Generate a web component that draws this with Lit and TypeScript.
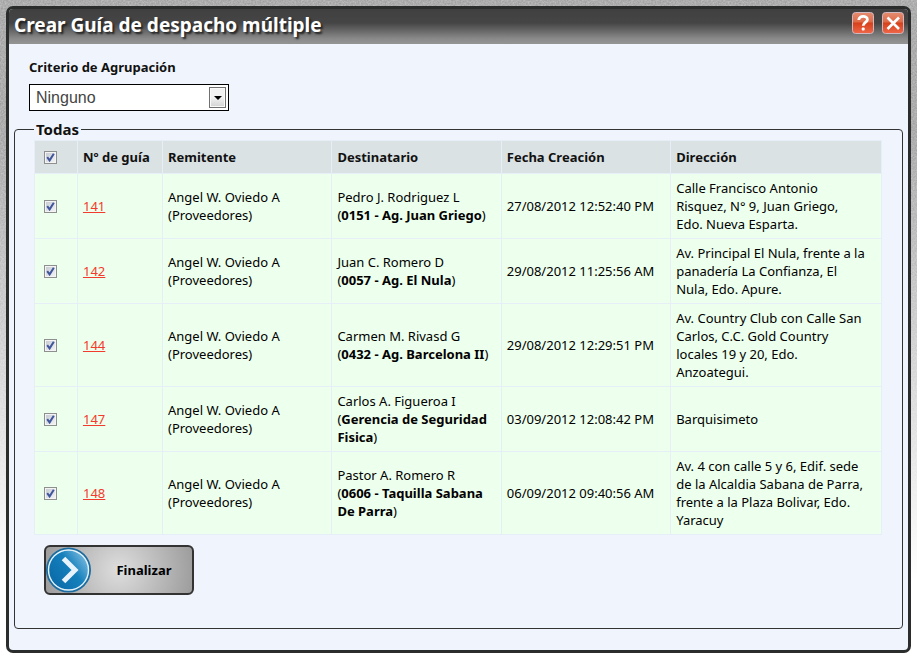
import { LitElement, html, css } from "lit";
import { customElement, property } from "lit/decorators.js";

interface Guide {
  id: number;
  recipient: string;
  agency: string;
  created: string;
  address: string;
}

const GUIDES: Guide[] = [
  { id: 141, recipient: "Pedro J. Rodriguez L", agency: "0151 - Ag. Juan Griego", created: "27/08/2012 12:52:40 PM", address: "Calle Francisco Antonio Risquez, N° 9, Juan Griego, Edo. Nueva Esparta." },
  { id: 142, recipient: "Juan C. Romero D", agency: "0057 - Ag. El Nula", created: "29/08/2012 11:25:56 AM", address: "Av. Principal El Nula, frente a la panadería La Confianza, El Nula, Edo. Apure." },
  { id: 144, recipient: "Carmen M. Rivasd G", agency: "0432 - Ag. Barcelona II", created: "29/08/2012 12:29:51 PM", address: "Av. Country Club con Calle San Carlos, C.C. Gold Country locales 19 y 20, Edo. Anzoategui." },
  { id: 147, recipient: "Carlos A. Figueroa I", agency: "Gerencia de Seguridad Fisica", created: "03/09/2012 12:08:42 PM", address: "Barquisimeto" },
  { id: 148, recipient: "Pastor A. Romero R", agency: "0606 - Taquilla Sabana De Parra", created: "06/09/2012 09:40:56 AM", address: "Av. 4 con calle 5 y 6, Edif. sede de la Alcaldia Sabana de Parra, frente a la Plaza Bolivar, Edo. Yaracuy" },
];

@customElement("guide-table")
export class GuideTable extends LitElement {
  @property({ attribute: false }) guides: Guide[] = [];

  static styles = css`
    :host { display: block; }
    table {
      width: 100%;
      table-layout: fixed;
      border-collapse: collapse;
      font-size: 13px;
      line-height: 18px;
    }
    .c-check { width: 43px; }
    .c-id { width: 85px; }
    .c-fifth { width: 20%; }
    th, td {
      border: 1px solid #e6eef8;
      padding: 5px;
      text-align: left;
      vertical-align: middle;
    }
    th { background: #dae2e4; color: #111; padding: 7px 5px; font-weight: 700; }
    td { background: #edffed; color: #000; }
    .pick { padding-left: 9px; }
    b { font-weight: 700; }
    .nowrap { white-space: nowrap; }
    .address { padding-right: 15px; }
    a { color: #f33a2c; }
    input {
      appearance: none;
      display: block;
      box-sizing: border-box;
      width: 13px;
      height: 13px;
      margin: 0;
      border: 1px solid #8e8f8f;
      box-shadow: inset 0 0 0 1px #f4f4f4;
      background: linear-gradient(135deg, #c3c8d0, #f6f6f6);
    }
    input:checked {
      background:
        url('data:image/svg+xml,<svg xmlns="http://www.w3.org/2000/svg" viewBox="0 0 11 11"><path d="M2.2 5.2 4.6 8.4 8.8 1.8" fill="none" stroke="%233f559c" stroke-width="2"/></svg>') center / 11px no-repeat,
        linear-gradient(135deg, #c3c8d0, #f6f6f6);
    }
  `;

  render() {
    return html`
      <table>
        <colgroup>
          <col class="c-check" /><col class="c-id" />
          <col class="c-fifth" /><col class="c-fifth" /><col class="c-fifth" /><col />
        </colgroup>
        <thead>
          <tr>
            <th class="pick"><input type="checkbox" checked aria-label="Seleccionar todas" /></th>
            <th>Nº de guía</th>
            <th>Remitente</th>
            <th>Destinatario</th>
            <th>Fecha Creación</th>
            <th>Dirección</th>
          </tr>
        </thead>
        <tbody>
          ${this.guides.map((g) => html`
            <tr>
              <td class="pick"><input type="checkbox" checked aria-label="Seleccionar guía ${g.id}" /></td>
              <td><a href="#${g.id}">${g.id}</a></td>
              <td>Angel W. Oviedo A<br />(Proveedores)</td>
              <td>${g.recipient}<br />(<b>${g.agency}</b>)</td>
              <td class="nowrap">${g.created}</td>
              <td class="address">${g.address}</td>
            </tr>`)}
        </tbody>
      </table>`;
  }
}

@customElement("app-root")
export class AppRoot extends LitElement {
  static styles = css`
    :host {
      display: block;
      box-sizing: border-box;
      min-height: 100vh;
      padding: 6px;
      font-family: "Noto Sans", "Open Sans", sans-serif;
      font-size: 13px;
      line-height: 18px;
      color: #111;
      background:
        linear-gradient(transparent 20%, #fff 88%),
        url('data:image/svg+xml,<svg xmlns="http://www.w3.org/2000/svg" width="200" height="200"><filter id="n" color-interpolation-filters="sRGB"><feTurbulence type="fractalNoise" baseFrequency=".6" numOctaves="2" stitchTiles="stitch"/><feColorMatrix values=".2 0 0 0 .58 .2 0 0 0 .58 .2 0 0 0 .58 0 0 0 0 1"/></filter><rect width="200" height="200" filter="url(%23n)"/></svg>'),
        #adadad;
    }
    .dialog {
      box-sizing: border-box;
      min-height: calc(100vh - 12px);
      border: 3px solid #2b2d2d;
      border-radius: 7px;
      background: #f0f5fd;
      overflow: hidden;
    }
    header {
      display: flex;
      align-items: flex-start;
      gap: 8px;
      box-sizing: border-box;
      height: 35px;
      padding: 3px 4px 0 5px;
      background: linear-gradient(#404040 0%, #454545 40%, #8a8a8a 85%, #949494 100%);
    }
    h1 {
      flex: 1;
      margin: 0;
      font-size: 19px;
      line-height: 26px;
      font-weight: 700;
      color: #fff;
      text-shadow: 2px 2px 2px #222;
    }
    .tool { display: block; width: 22px; height: 22px; padding: 0; border: 0; background: none; }
    .tool svg { display: block; }
    .criteria {
      display: flex;
      flex-direction: column;
      align-items: flex-start;
      gap: 8px;
      padding: 14px 20px 8px;
    }
    label { font-weight: 700; }
    .select { display: grid; width: 200px; }
    select, .arrow { grid-area: 1 / 1; }
    select {
      appearance: none;
      height: 27px;
      padding: 0 6px;
      border: 1px solid #000;
      border-radius: 0;
      background: #fff;
      color: #444;
      font: 16px "Liberation Sans", Arial, sans-serif;
    }
    .arrow {
      display: grid;
      place-items: center;
      place-self: center end;
      box-sizing: border-box;
      width: 17px;
      height: 21px;
      margin-right: 3px;
      border: 1px solid #707070;
      box-shadow: inset 0 0 0 1px #fafafa;
      background: linear-gradient(#f2f2f2 50%, #d2d2d2);
      pointer-events: none;
    }
    fieldset {
      min-width: 0;
      margin: 0 5px 20px;
      padding: 1px 20px 33px 19px;
      border: 1px solid #333;
      border-radius: 4px;
    }
    legend { padding: 0 2px; font-size: 15px; line-height: 20px; font-weight: 700; }
    .finish {
      display: flex;
      align-items: center;
      box-sizing: border-box;
      width: 150px;
      height: 50px;
      margin: 10px 0 0 10px;
      padding: 0;
      border: 2px solid #333;
      border-radius: 6px;
      background: radial-gradient(circle at center, #dedede, #9c9c9c);
      color: #000;
      font: 700 13px "Noto Sans", "Open Sans", sans-serif;
    }
    .finish span { flex: 1; padding-left: 4px; }
  `;

  private tool(label: string, glyph: unknown) {
    return html`
      <button class="tool" aria-label=${label}>
        <svg width="22" height="22" viewBox="0 0 22 22">
          <defs>
            <linearGradient id="red" x2="0" y2="1">
              <stop offset="0" stop-color="#e58c70" /><stop offset=".45" stop-color="#de6a48" />
              <stop offset=".5" stop-color="#d5401a" /><stop offset="1" stop-color="#f0684a" />
            </linearGradient>
          </defs>
          <rect x=".5" y=".5" width="21" height="21" rx="3" fill="url(#red)" stroke="#d0b8c0" />
          ${glyph}
        </svg>
      </button>`;
  }

  render() {
    return html`
      <main class="dialog">
        <header>
          <h1>Crear Guía de despacho múltiple</h1>
          ${this.tool("Ayuda", html`<svg width="22" height="22"><path d="M6.8 8C6.6 3.4 15.6 3.2 15.4 7.6c-.2 2.8-4.2 2.8-4.2 6.2" fill="none" stroke="#fff" stroke-width="2.8" /><rect x="9.7" y="15.6" width="3" height="3" rx="1" fill="#fff" /></svg>`)}
          ${this.tool("Cerrar", html`<svg width="22" height="22"><path d="M5.5 5.5 17 17M17 5.5 5.5 17" stroke="#fff" stroke-width="2.6" /></svg>`)}
        </header>
        <section class="criteria">
          <label for="group">Criterio de Agrupación</label>
          <div class="select">
            <select id="group"><option>Ninguno</option></select>
            <span class="arrow"><svg width="8" height="4" viewBox="0 0 8 4"><path d="M0 0h8L4 4z" /></svg></span>
          </div>
        </section>
        <fieldset>
          <legend>Todas</legend>
          <guide-table .guides=${GUIDES}></guide-table>
          <button class="finish">
            <svg width="46" height="46" viewBox="0 0 46 46">
              <defs>
                <linearGradient id="blue" x1="0" y1=".7" x2="1" y2="0">
                  <stop offset="0" stop-color="#0a6aa8" /><stop offset=".5" stop-color="#1580bc" /><stop offset="1" stop-color="#a4d2ee" />
                </linearGradient>
              </defs>
              <circle cx="22.5" cy="23" r="21.5" fill="url(#blue)" stroke="#1d6c9f" stroke-width="2" />
              <circle cx="22.5" cy="23" r="20" fill="none" stroke="#e4f2fa" stroke-width="1.4" />
              <path d="M17.5 11.5 29 23 17.5 34.5" fill="none" stroke="#e8f3fb" stroke-width="5" />
            </svg>
            <span>Finalizar</span>
          </button>
        </fieldset>
      </main>`;
  }
}
